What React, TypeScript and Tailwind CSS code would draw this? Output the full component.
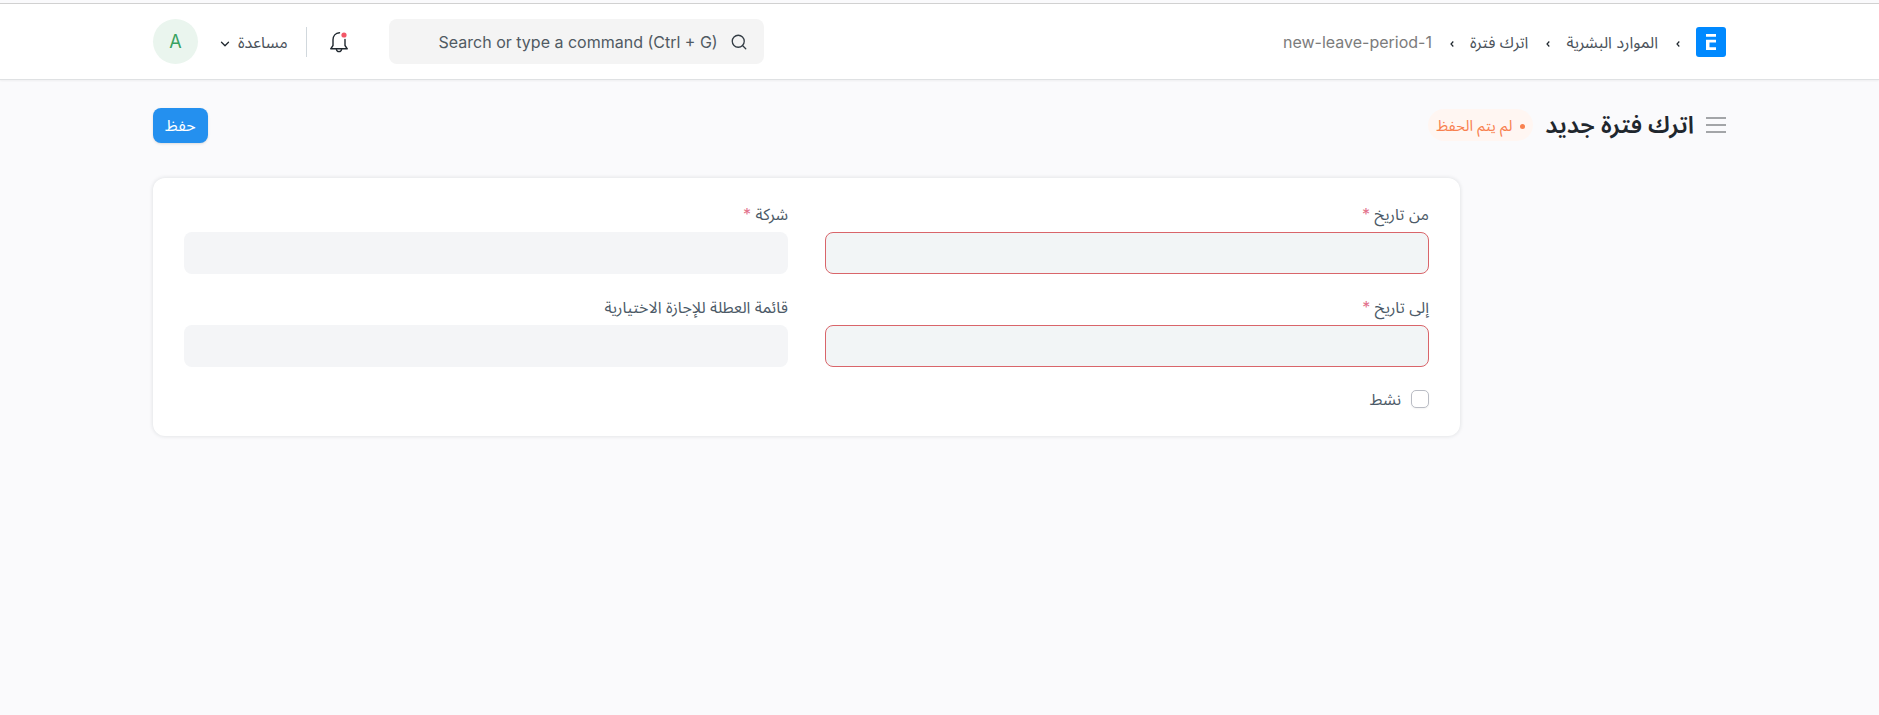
import { ReactNode } from 'react'
import { ChevronDown, Search } from 'lucide-react'

type FieldProps = {
  id: string
  label: string
  required?: boolean
  invalid?: boolean
}

function Field({ id, label, required, invalid }: FieldProps) {
  return (
    <div className="flex flex-col gap-2">
      <label htmlFor={id} className="text-base leading-5 text-[#4c5a67]">
        {label}
        {required && <span className="text-[#e2708a]"> *</span>}
      </label>
      <input
        id={id}
        type="text"
        required={required}
        aria-invalid={invalid}
        className={
          invalid
            ? 'h-[42px] w-full rounded-lg border border-[#d9656a] bg-[#f2f5f6] px-3 outline-none'
            : 'h-[42px] w-full rounded-lg bg-[#f4f5f7] px-3 outline-none'
        }
      />
    </div>
  )
}

function Crumb({ children }: { children: ReactNode }) {
  return (
    <li className="flex items-center gap-[18px]">
      <svg viewBox="0 0 4 6" className="mt-1 h-1.5 w-1" fill="none" stroke="#1f272e" strokeWidth="1.2">
        <path d="M3.3.5 1 3l2.300 2.500" />
      </svg>
      {children}
    </li>
  )
}

function Logo() {
  return (
    <svg viewBox="0 0 30 30" className="size-[30px]" aria-hidden="true">
      <rect width="30" height="30" rx="3" fill="#0089ff" />
      <path d="M10 7h10v2.800H10zM10 12.800h10v2.800h-6.500v4.600H20V23H10z" fill="#fff" />
    </svg>
  )
}

function BellIcon() {
  return (
    <svg viewBox="0 0 20 22" className="h-[22px] w-5" fill="none" stroke="#1f272e" strokeWidth="1.4" aria-hidden="true">
      <path d="M10.500 1.800C6.500 2 4 5 4 8.800V14.500L1.700 17.800H18.300L16 14.500V8.500" strokeLinejoin="round" strokeLinecap="round" />
      <path d="M7.300 18.100c.3 1.600 1.300 2.500 2.700 2.500s2.400-.9 2.700-2.500" />
      <circle cx="15" cy="4" r="2.600" fill="#f25767" stroke="none" />
    </svg>
  )
}

function Navbar() {
  return (
    <header className="border-t border-b border-t-[#d1d1d1] border-b-[#dfe1e3] bg-white shadow-xs">
      <div className="mx-auto flex h-[75px] max-w-[1573px] items-center justify-between">
        <nav aria-label="breadcrumb" className="flex items-center gap-4">
          <a href="#home" aria-label="الرئيسية">
            <Logo />
          </a>
          <ol className="flex items-center gap-4 text-base text-[#4c5a67]">
            <Crumb><a href="#hr" className="text-[#4a525a]">الموارد البشرية</a></Crumb>
            <Crumb><a href="#leave-period" className="text-[#4a525a]">اترك فترة</a></Crumb>
            <Crumb><span dir="ltr" className="text-[#7c7c7c]">new-leave-period-1</span></Crumb>
          </ol>
        </nav>

        <div className="flex items-center">
          <div className="relative ml-10">
            <input
              type="text"
              dir="ltr"
              aria-label="Search"
              placeholder="Search or type a command (Ctrl + G)"
              className="h-[45px] w-[375px] rounded-lg bg-[#f4f4f4] pr-[46px] pl-4 text-right text-base text-[#333c44] outline-none placeholder:text-[#505a62]"
            />
            <Search className="absolute top-3.5 right-4 size-[18px] text-[#333c44]" strokeWidth={1.75} />
          </div>
          <button type="button" aria-label="الإشعارات" className="ml-[22px]">
            <BellIcon />
          </button>
          <div className="ml-[18px] h-[30px] w-px bg-[#d1d8dd]" />
          <button type="button" className="ml-5 flex items-center gap-1.5 text-base text-[#4a525a]">
            مساعدة
            <ChevronDown className="mt-1 size-3.5 text-[#1f272e]" strokeWidth={2.25} />
          </button>
          <button type="button" className="size-[45px] rounded-full bg-[#eaf5ee] text-lg text-[#38a160]">
            A
          </button>
        </div>
      </div>
    </header>
  )
}

function PageHead() {
  return (
    <div className="mx-auto mb-2 flex h-[90px] max-w-[1573px] items-center justify-between">
      <div className="flex items-center gap-3">
        <button type="button" aria-label="القائمة" className="flex h-5 w-5 flex-col justify-center gap-[5px]">
          <span className="h-0.5 bg-[#a3a5a8]" />
          <span className="h-0.5 bg-[#a3a5a8]" />
          <span className="h-0.5 bg-[#a3a5a8]" />
        </button>
        <h1 className="text-2xl font-semibold text-[#1f272e]">اترك فترة جديد</h1>
        <span className="flex items-center gap-2 rounded-full bg-[#fff6f2] px-2 pt-1.5 pb-1 text-[15px] text-[#f8814f]">
          <span className="size-[5px] rounded-full bg-[#f8814f]" />
          لم يتم الحفظ
        </span>
      </div>
      <button type="button" className="h-[35px] rounded-lg bg-[#2490ef] px-3 text-base text-white shadow-sm">
        حفظ
      </button>
    </div>
  )
}

export default function App() {
  return (
    <div
      dir="rtl"
      className="min-h-screen bg-[#fafafc] pt-[3px] font-['Inter','Noto_Sans_Arabic','Noto_Sans','DejaVu_Sans',sans-serif]"
    >
      <Navbar />
      <main>
        <PageHead />
        <div className="mx-auto flex max-w-[1573px]">
          <aside className="w-[266px] shrink-0" />
          <form className="grid grow grid-cols-2 gap-x-[37px] rounded-xl bg-white px-[31px] pt-[26px] pb-7 shadow-[0_0_4px_rgba(25,39,52,0.14)]">
            <div className="flex flex-col gap-[23px]">
              <Field id="from-date" label="من تاريخ" required invalid />
              <Field id="to-date" label="إلى تاريخ" required invalid />
              <label className="flex items-center gap-2.5 text-base leading-[18px] text-[#4c5a67]">
                <input type="checkbox" className="size-[18px] appearance-none rounded-[5px] border border-[#b9bcc4] bg-white shadow-xs" />
                نشط
              </label>
            </div>
            <div className="flex flex-col gap-[23px]">
              <Field id="company" label="شركة" required />
              <Field id="holiday-list" label="قائمة العطلة للإجازة الاختيارية" />
            </div>
          </form>
        </div>
      </main>
    </div>
  )
}
